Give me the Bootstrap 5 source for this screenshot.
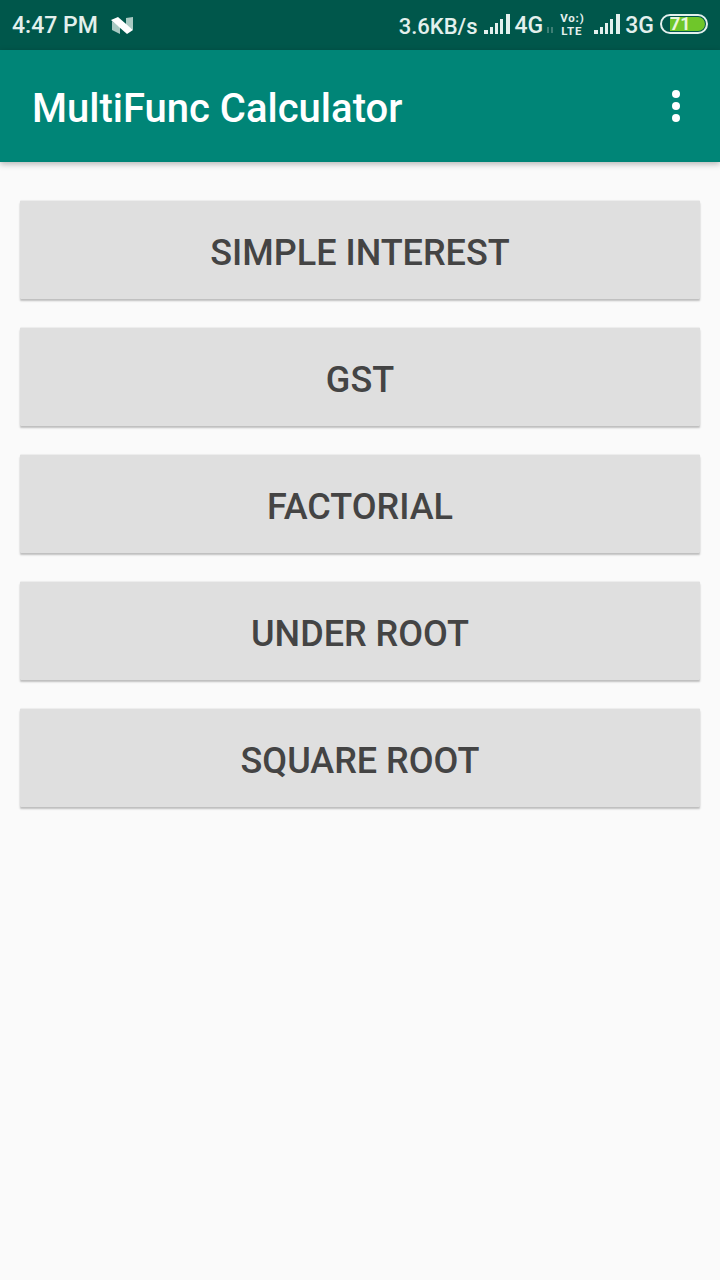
<!DOCTYPE html>
<html lang="en">
<head>
  <meta charset="UTF-8" />
  <title>MultiFunc Calculator</title>
  <meta name="viewport" content="width=device-width, initial-scale=1" />
  <link href="https://cdn.jsdelivr.net/npm/bootstrap@5.3.2/dist/css/bootstrap.min.css" rel="stylesheet" />
  <style>
    body {
      background-color: #fafafa;
      font-family: Roboto, "Liberation Sans", sans-serif;
      height: 1280px;
      overflow: hidden;
    }
    .status-bar {
      height: 50px;
      background-color: #00574b;
      color: #e3f0ed;
      font-weight: 500;
      font-size: 23px;
      padding: 2px 12px 0;
    }
    .speed-text {
      font-size: 22px;
      margin-right: 1px;
    }
    .n-icon {
      margin: 0 0 0 12px;
    }
    .sig-icon {
      margin: 0 4px 4px 4px;
    }
    .arrows-icon {
      margin: 8px 6px 0 3px;
    }
    .volte {
      font-size: 11.5px;
      line-height: 13px;
      font-weight: 700;
      letter-spacing: .8px;
      text-align: center;
      width: 23px;
      margin: 0 6px 2px 0;
    }
    .batt {
      width: 48px;
      height: 20px;
      border: 2.5px solid #e3f0ed;
      border-radius: 10px;
      padding: 1px 1px 1px 8px;
      margin: 0 0 4px 6px;
    }
    .batt-fill {
      width: 100%;
      height: 100%;
      background-color: #6fc62a;
      border-radius: 0 7px 7px 0;
      font-size: 18px;
      font-weight: 700;
      line-height: 13px;
      color: #e8f5dc;
    }
    .app-bar {
      height: 112px;
      background-color: #008577;
      box-shadow: 0 2px 6px rgba(0, 0, 0, 0.28);
      padding: 0 40px 0 33px;
      position: relative;
    }
    .app-title {
      color: #fff;
      font-size: 40px;
      font-weight: 500;
      margin: 6px 0 0 -1px;
      line-height: 1;
    }
    .menu-dots {
      gap: 4px;
    }
    .menu-dots span {
      width: 8px;
      height: 8px;
      border-radius: 50%;
      background-color: #fff;
    }
    .calc-list {
      padding: 39px 20px 0;
      gap: 29px;
    }
    .calc-btn {
      height: 98px;
      background-color: #dfdfdf;
      color: #444;
      border: 0;
      border-radius: 1px;
      font-size: 36px;
      font-weight: 500;
      box-shadow: 0 2px 2px rgba(0, 0, 0, 0.24), 0 -1px 1px rgba(0, 0, 0, 0.05), 0 0 1px rgba(0, 0, 0, 0.1);
      padding: 5px 0 0;
      line-height: 1;
    }
  </style>
</head>
<body>
  <div class="status-bar d-flex align-items-center justify-content-between">
    <div class="d-flex align-items-center">
      <span>4:47 PM</span>
      <svg class="n-icon" width="24" height="20" viewBox="0 0 24 20">
        <path d="M2 5 10 11V18L2 14Z" fill="#a9c9c2"/>
        <path d="M16 2 23 1V14L16 9Z" fill="#a9c9c2"/>
        <path d="M1 4 8 1 23 14 17 18Z" fill="#fff"/>
      </svg>
    </div>
    <div class="d-flex align-items-center">
      <span class="speed-text">3.6KB/s</span>
      <svg class="sig-icon" width="28" height="20" viewBox="0 0 28 20" fill="#e3f0ed">
        <rect x="1" y="16" width="4" height="4"/>
        <rect x="7" y="13" width="3" height="7"/>
        <rect x="12" y="9" width="3" height="11"/>
        <rect x="17" y="5" width="3" height="15"/>
        <rect x="23" y="0" width="4" height="20"/>
      </svg>
      <span>4G</span>
      <svg class="arrows-icon" width="8" height="8" viewBox="0 0 8 8" fill="none" stroke="#7fa8a0" stroke-width="1">
        <path d="M2 1V7M6 1V7"/>
      </svg>
      <div class="volte"><div>Vo:)</div><div>LTE</div></div>
      <svg class="sig-icon" width="28" height="20" viewBox="0 0 28 20" fill="#e3f0ed">
        <rect x="1" y="16" width="4" height="4"/>
        <rect x="7" y="13" width="3" height="7"/>
        <rect x="12" y="9" width="3" height="11"/>
        <rect x="17" y="5" width="3" height="15"/>
        <rect x="23" y="0" width="4" height="20"/>
      </svg>
      <span>3G</span>
      <div class="batt"><div class="batt-fill">71</div></div>
    </div>
  </div>

  <div class="app-bar d-flex align-items-center justify-content-between">
    <h1 class="app-title">MultiFunc Calculator</h1>
    <div class="menu-dots d-flex flex-column">
      <span></span>
      <span></span>
      <span></span>
    </div>
  </div>

  <div class="calc-list d-flex flex-column">
    <button type="button" class="btn calc-btn">SIMPLE INTEREST</button>
    <button type="button" class="btn calc-btn">GST</button>
    <button type="button" class="btn calc-btn">FACTORIAL</button>
    <button type="button" class="btn calc-btn">UNDER ROOT</button>
    <button type="button" class="btn calc-btn">SQUARE ROOT</button>
  </div>

  <script src="https://cdn.jsdelivr.net/npm/bootstrap@5.3.2/dist/js/bootstrap.bundle.min.js"></script>
</body>
</html>
